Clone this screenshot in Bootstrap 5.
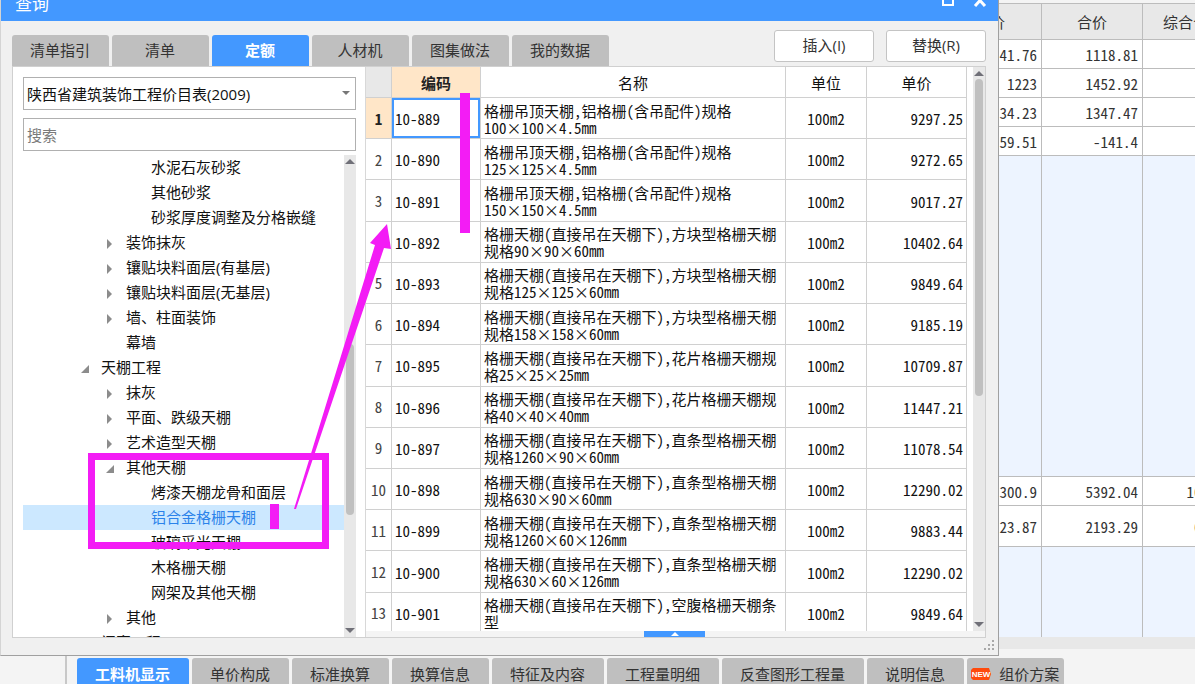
<!DOCTYPE html>
<html lang="zh-CN">
<head>
<meta charset="utf-8">
<meta name="viewport" content="width=device-width, initial-scale=1">
<title>查询</title>
<link href="https://cdn.jsdelivr.net/npm/bootstrap@5.3.0/dist/css/bootstrap.min.css" rel="stylesheet">
<style>
:root { --accent: #4398ff; --line: #d0d0d0; }
body { font: 15px/20px "Open Sans", "Noto Sans CJK SC", sans-serif; color: #222; background: #f4f4f4; }
.mono { font-family: "Noto Sans Mono CJK SC", "Liberation Mono", "Noto Sans CJK SC", monospace; }

/* query window */
.main-row { min-height: 0; }
.query-win { background: #f0f0f0; border: 1px solid #a0a0a0; border-left-color: #d4d4d4; border-top: 0; }
.title-bar { height: 21px; background: var(--accent); color: #fff; padding: 0 11px 0 14px; }
.title-bar h1 { font-size: 17px; line-height: 8px; font-weight: 400; }
.win-btn { line-height: 0; color: #fff; }
.tool-row { height: 45px; padding: 9px 12px 0 11px; }
.tab-btn { height: 31px; min-width: 97px; padding: 0 19px 0 18px; border: 0; border-radius: 3px 3px 0 0; background: #bfbfbf; color: #333; }
.tool-row .tab-btn { padding-bottom: 2px; }
.tab-btn.active { background: var(--accent); color: #fff; font-weight: 700; }
.tab-gap { gap: 3px; }
.act-btn { width: 100px; height: 32px; padding: 0 0 2px; border: 1px solid #c4c4c4; border-radius: 3px; background: #fff; color: #333; }
.work-area { margin: 0 12px 17px 11px; border: 1px solid var(--line); }

/* left pane */
.side-pane { width: 353px; background: #fff; padding: 10px 9px 0 10px; border-right: 1px solid #d8d8d8; }
.side-pane .form-select, .side-pane .form-control { height: 33px; border: 1px solid #b0b0b0; border-radius: 0; padding: 0 3px; font-size: 15px; line-height: 20px; color: #111; }
.side-pane .form-select { background-image: none; }
.select-caret { position: absolute; right: 6px; top: 14px; width: 8px; height: 5px; }
.side-pane .form-control::placeholder { color: #7a7a7a; }
.tree-list li { height: 25px; line-height: 25px; white-space: nowrap; color: #111; }
.tree-list .lv1 { padding-left: 58px; }
.tree-list .lv2 { padding-left: 83px; }
.tree-list .lv3 { padding-left: 128px; }
.tree-list .leaf { padding-left: 103px; }
.tree-list .plain { padding-left: 78px; }
.tree-list .selected { background: #cce8ff; color: #2b83ea; }
.tree-list svg { width: 8px; height: 10px; margin-right: 12px; fill: #8c8c8c; display: inline-block; vertical-align: -1px; }
.scroll-track { width: 12px; background: #e8e8e8; }
.scroll-track svg { width: 10px; height: 5px; fill: #707078; }
.scroll-thumb { width: 8px; border-radius: 4px; background: #c0c0c0; }
.tree-thumb { height: 36%; margin-top: 180px; }
.grid-thumb { height: 57%; margin-top: 3px; }
.grid-track { margin-left: 6px; }

/* quota table */
.quota-table { table-layout: fixed; height: 567px; border-collapse: separate; border-spacing: 0; color: #111; background: #fff; }
.quota-table th, .quota-table td { border-right: 1px solid var(--line); border-bottom: 1px solid var(--line); padding: 1px 3px 0; line-height: 17px; vertical-align: middle; }
.quota-table thead th { height: 31px; font-weight: 400; text-align: center; padding: 0; }
.quota-table tbody th { font-weight: 400; text-align: center; color: #444; padding: 0; }
.quota-table td:nth-child(3) { word-break: break-all; padding-right: 0; }
.quota-table td:nth-child(4) { text-align: center; }
.quota-table td:nth-child(5) { text-align: right; }
.quota-table .corner { background: #e8e8e8; }
.quota-table .hot { background: #ffe6c8; font-weight: 700 !important; color: #222; }
.quota-table .current { box-shadow: inset 0 0 0 2px var(--accent); }
.foot-strip { height: 6px; background: #f4f4f4; }
.pull-tab { width: 61px; height: 6px; border: 0; padding: 0; background: var(--accent); line-height: 0; margin-left: 278px; }
.grip { position: absolute; right: 3px; bottom: 4px; width: 12px; height: 12px; fill: #a8a8a8; }

/* sheet behind the window */
.sheet-pane { width: 196px; background: #f4f4f4; color: #333; }
.sheet-table { table-layout: fixed; width: 245px; border-collapse: separate; border-spacing: 0; margin-top: 3px; }
.sheet-table th, .sheet-table td { height: 29px; border-right: 1px solid #bcbcbc; border-bottom: 1px solid #bcbcbc; padding: 0 4px 0 0; text-align: right; line-height: 17px; white-space: nowrap; background: #fff; vertical-align: middle; }
.sheet-table th { background: #e8e8e8; height: 37px; padding: 0; font-weight: 400; text-align: center; border-top: 1px solid #bcbcbc; }
.sheet-table th:first-child { text-indent: -24px; text-align: left; }
.sheet-table .tall td { height: 41px; }
.sheet-table .void td { background: #edf4ff; }
.sheet-table .upper td { height: 321px; }
.sheet-table .lower td { height: 90px; border-bottom: 0; }
.sheet-foot { height: 12px; background: #e8e8e8; }

.bottom-bar { height: 28px; padding-top: 2px; }
.bottom-stub { width: 67px; border-right: 2px solid #c8c8c8; margin-right: 10px; margin-top: -2px; }
.new-tag { width: 20px; height: 12px; }
.markup { position: absolute; left: 0; top: 0; pointer-events: none; }
</style>
</head>
<body class="vh-100 d-flex flex-column overflow-hidden position-relative">
<main class="main-row d-flex flex-grow-1">
  <section class="query-win d-flex flex-column flex-grow-1 position-relative">
    <header class="title-bar d-flex justify-content-between align-items-start flex-shrink-0">
      <h1 class="m-0">查询</h1>
      <div class="d-flex">
        <button class="win-btn btn p-0 border-0 me-3" aria-label="最大化"><svg width="16" height="8" viewBox="0 0 16 8"><path d="M2-4H12V5H2Z" fill="none" stroke="#fff" stroke-width="2"/></svg></button>
        <button class="win-btn btn p-0 border-0" aria-label="关闭"><svg width="14" height="8" viewBox="0 0 14 8"><path d="M2-5 12 6M12-5 2 6" fill="none" stroke="#fff" stroke-width="3"/></svg></button>
      </div>
    </header>
    <div class="tool-row d-flex justify-content-between flex-shrink-0">
      <nav class="d-flex align-items-end tab-gap">
        <button class="tab-btn">清单指引</button><button class="tab-btn">清单</button><button class="tab-btn active">定额</button><button class="tab-btn">人材机</button><button class="tab-btn">图集做法</button><button class="tab-btn">我的数据</button>
      </nav>
      <div class="d-flex gap-2">
        <button class="act-btn me-1">插入(I)</button><button class="act-btn">替换(R)</button>
      </div>
    </div>
    <div class="work-area d-flex flex-grow-1 overflow-hidden">
      <div class="side-pane d-flex flex-column flex-shrink-0">
        <div class="position-relative mb-2">
          <select class="form-select" aria-label="定额库"><option>陕西省建筑装饰工程价目表(2009)</option></select>
          <svg class="select-caret" viewBox="0 0 8 5"><path d="M0 0H8L4 4Z" fill="#777"/></svg>
        </div>
        <input class="form-control flex-shrink-0" type="text" placeholder="搜索" aria-label="搜索">
        <div class="d-flex flex-grow-1 overflow-hidden mt-1">
          <ul class="tree-list list-unstyled m-0 flex-grow-1">
            <li class="lv3">水泥石灰砂浆</li>
            <li class="lv3">其他砂浆</li>
            <li class="lv3">砂浆厚度调整及分格嵌缝</li>
            <li class="lv2"><svg viewBox="0 0 8 10"><path d="M1 0 6 5 1 10Z"/></svg>装饰抹灰</li>
            <li class="lv2"><svg viewBox="0 0 8 10"><path d="M1 0 6 5 1 10Z"/></svg>镶贴块料面层(有基层)</li>
            <li class="lv2"><svg viewBox="0 0 8 10"><path d="M1 0 6 5 1 10Z"/></svg>镶贴块料面层(无基层)</li>
            <li class="lv2"><svg viewBox="0 0 8 10"><path d="M1 0 6 5 1 10Z"/></svg>墙、柱面装饰</li>
            <li class="leaf">幕墙</li>
            <li class="lv1"><svg viewBox="0 0 8 10"><path d="M0 9H8V1Z"/></svg>天棚工程</li>
            <li class="lv2"><svg viewBox="0 0 8 10"><path d="M1 0 6 5 1 10Z"/></svg>抹灰</li>
            <li class="lv2"><svg viewBox="0 0 8 10"><path d="M1 0 6 5 1 10Z"/></svg>平面、跌级天棚</li>
            <li class="lv2"><svg viewBox="0 0 8 10"><path d="M1 0 6 5 1 10Z"/></svg>艺术造型天棚</li>
            <li class="lv2"><svg viewBox="0 0 8 10"><path d="M0 9H8V1Z"/></svg>其他天棚</li>
            <li class="lv3">烤漆天棚龙骨和面层</li>
            <li class="lv3 selected">铝合金格栅天棚</li>
            <li class="lv3">玻璃采光天棚</li>
            <li class="lv3">木格栅天棚</li>
            <li class="lv3">网架及其他天棚</li>
            <li class="lv2"><svg viewBox="0 0 8 10"><path d="M1 0 6 5 1 10Z"/></svg>其他</li>
            <li class="plain">门窗工程</li>
          </ul>
          <div class="scroll-track d-flex flex-column align-items-center py-1 flex-shrink-0">
            <svg viewBox="0 0 10 5"><path d="M0 5H10L5 0Z"/></svg>
            <div class="scroll-thumb tree-thumb"></div>
            <svg class="mt-auto" viewBox="0 0 10 5"><path d="M0 0H10L5 5Z"/></svg>
          </div>
        </div>
      </div>
      <div class="d-flex flex-column flex-grow-1 overflow-hidden">
        <div class="d-flex flex-grow-1 overflow-hidden bg-white">
          <div class="flex-grow-1 overflow-hidden">
          <table class="quota-table mono w-100">
            <colgroup><col style="width:26px"><col style="width:89px"><col><col style="width:81px"><col style="width:100px"></colgroup>
            <thead><tr><th class="corner"></th><th class="hot">编码</th><th>名称</th><th>单位</th><th>单价</th></tr></thead>
            <tbody>
              <tr><th class="hot">1</th><td class="current">10-889</td><td>格栅吊顶天棚,铝格栅(含吊配件)规格<br>100×100×4.5mm</td><td>100m2</td><td>9297.25</td></tr>
              <tr><th>2</th><td>10-890</td><td>格栅吊顶天棚,铝格栅(含吊配件)规格<br>125×125×4.5mm</td><td>100m2</td><td>9272.65</td></tr>
              <tr><th>3</th><td>10-891</td><td>格栅吊顶天棚,铝格栅(含吊配件)规格<br>150×150×4.5mm</td><td>100m2</td><td>9017.27</td></tr>
              <tr><th>4</th><td>10-892</td><td>格栅天棚(直接吊在天棚下),方块型格栅天棚<br>规格90×90×60mm</td><td>100m2</td><td>10402.64</td></tr>
              <tr><th>5</th><td>10-893</td><td>格栅天棚(直接吊在天棚下),方块型格栅天棚<br>规格125×125×60mm</td><td>100m2</td><td>9849.64</td></tr>
              <tr><th>6</th><td>10-894</td><td>格栅天棚(直接吊在天棚下),方块型格栅天棚<br>规格158×158×60mm</td><td>100m2</td><td>9185.19</td></tr>
              <tr><th>7</th><td>10-895</td><td>格栅天棚(直接吊在天棚下),花片格栅天棚规<br>格25×25×25mm</td><td>100m2</td><td>10709.87</td></tr>
              <tr><th>8</th><td>10-896</td><td>格栅天棚(直接吊在天棚下),花片格栅天棚规<br>格40×40×40mm</td><td>100m2</td><td>11447.21</td></tr>
              <tr><th>9</th><td>10-897</td><td>格栅天棚(直接吊在天棚下),直条型格栅天棚<br>规格1260×90×60mm</td><td>100m2</td><td>11078.54</td></tr>
              <tr><th>10</th><td>10-898</td><td>格栅天棚(直接吊在天棚下),直条型格栅天棚<br>规格630×90×60mm</td><td>100m2</td><td>12290.02</td></tr>
              <tr><th>11</th><td>10-899</td><td>格栅天棚(直接吊在天棚下),直条型格栅天棚<br>规格1260×60×126mm</td><td>100m2</td><td>9883.44</td></tr>
              <tr><th>12</th><td>10-900</td><td>格栅天棚(直接吊在天棚下),直条型格栅天棚<br>规格630×60×126mm</td><td>100m2</td><td>12290.02</td></tr>
              <tr><th>13</th><td>10-901</td><td>格栅天棚(直接吊在天棚下),空腹格栅天棚条<br>型</td><td>100m2</td><td>9849.64</td></tr>
            </tbody>
          </table>
          </div>
          <div class="scroll-track grid-track d-flex flex-column align-items-center py-1 flex-shrink-0">
            <svg viewBox="0 0 10 5"><path d="M0 5H10L5 0Z"/></svg>
            <div class="scroll-thumb grid-thumb"></div>
            <svg class="mt-auto" viewBox="0 0 10 5"><path d="M0 0H10L5 5Z"/></svg>
          </div>
        </div>
        <div class="foot-strip d-flex flex-shrink-0"><button class="pull-tab" aria-label="展开"><svg width="8" height="4" viewBox="0 0 8 4"><path d="M0 4H8L4 0Z" fill="#fff"/></svg></button></div>
      </div>
    </div>
    <svg class="grip" viewBox="0 0 12 12"><path d="M9 1h2v2H9zM5 5h2v2H5zM9 5h2v2H9zM1 9h2v2H1zM5 9h2v2H5zM9 9h2v2H9z"/></svg>
  </section>
  <section class="sheet-pane flex-shrink-0 overflow-hidden">
    <table class="sheet-table mono">
      <colgroup><col style="width:43px"><col style="width:101px"><col style="width:101px"></colgroup>
      <tbody>
      <tr><th>单价</th><th>合价</th><th>综合合价</th></tr>
      <tr><td>41.76</td><td>1118.81</td><td></td></tr>
      <tr><td>1223</td><td>1452.92</td><td></td></tr>
      <tr><td>34.23</td><td>1347.47</td><td></td></tr>
      <tr><td>59.51</td><td>-141.4</td><td></td></tr>
      <tr class="void upper"><td></td><td></td><td></td></tr>
      <tr><td>300.9</td><td>5392.04</td><td>1078.41</td></tr>
      <tr class="tall"><td>23.87</td><td>2193.29</td><td>678.52</td></tr>
      <tr class="void lower"><td></td><td></td><td></td></tr>
      </tbody>
    </table>
    <div class="sheet-foot"></div>
  </section>
</main>
<footer class="bottom-bar d-flex flex-shrink-0">
  <div class="bottom-stub flex-shrink-0"></div>
  <nav class="d-flex tab-gap">
    <button class="tab-btn active">工料机显示</button><button class="tab-btn">单价构成</button><button class="tab-btn">标准换算</button><button class="tab-btn">换算信息</button><button class="tab-btn">特征及内容</button><button class="tab-btn">工程量明细</button><button class="tab-btn">反查图形工程量</button><button class="tab-btn">说明信息</button><button class="tab-btn d-flex align-items-center gap-2 px-1"><svg class="new-tag" viewBox="0 0 20 12"><path d="M2 0H18L19 3 20 6 19 9 18 12H2L0 10V2Z" fill="#ff4a0c"/><text x="10" y="9" text-anchor="middle" font-family="Liberation Sans" font-size="8" font-weight="700" fill="#fff">NEW</text></svg>组价方案</button>
  </nav>
</footer>
<svg class="markup" width="400" height="560" viewBox="0 0 400 560">
  <g fill="#f31cf5">
    <path d="M294 509 375 245 370 243 387 224 391 249 384 248 296 509Z"/>
    <path d="M270 504h9v25h-9z"/>
  </g>
  <path d="M91.500 456.500H325.500V545.500H91.500Z" fill="none" stroke="#f31cf5" stroke-width="7"/>
</svg>
<svg class="markup" width="480" height="240" viewBox="0 0 480 240"><path d="M460 93h10v140h-10z" fill="#f31cf5"/></svg>
<script src="https://cdn.jsdelivr.net/npm/bootstrap@5.3.0/dist/js/bootstrap.bundle.min.js"></script>
</body>
</html>
